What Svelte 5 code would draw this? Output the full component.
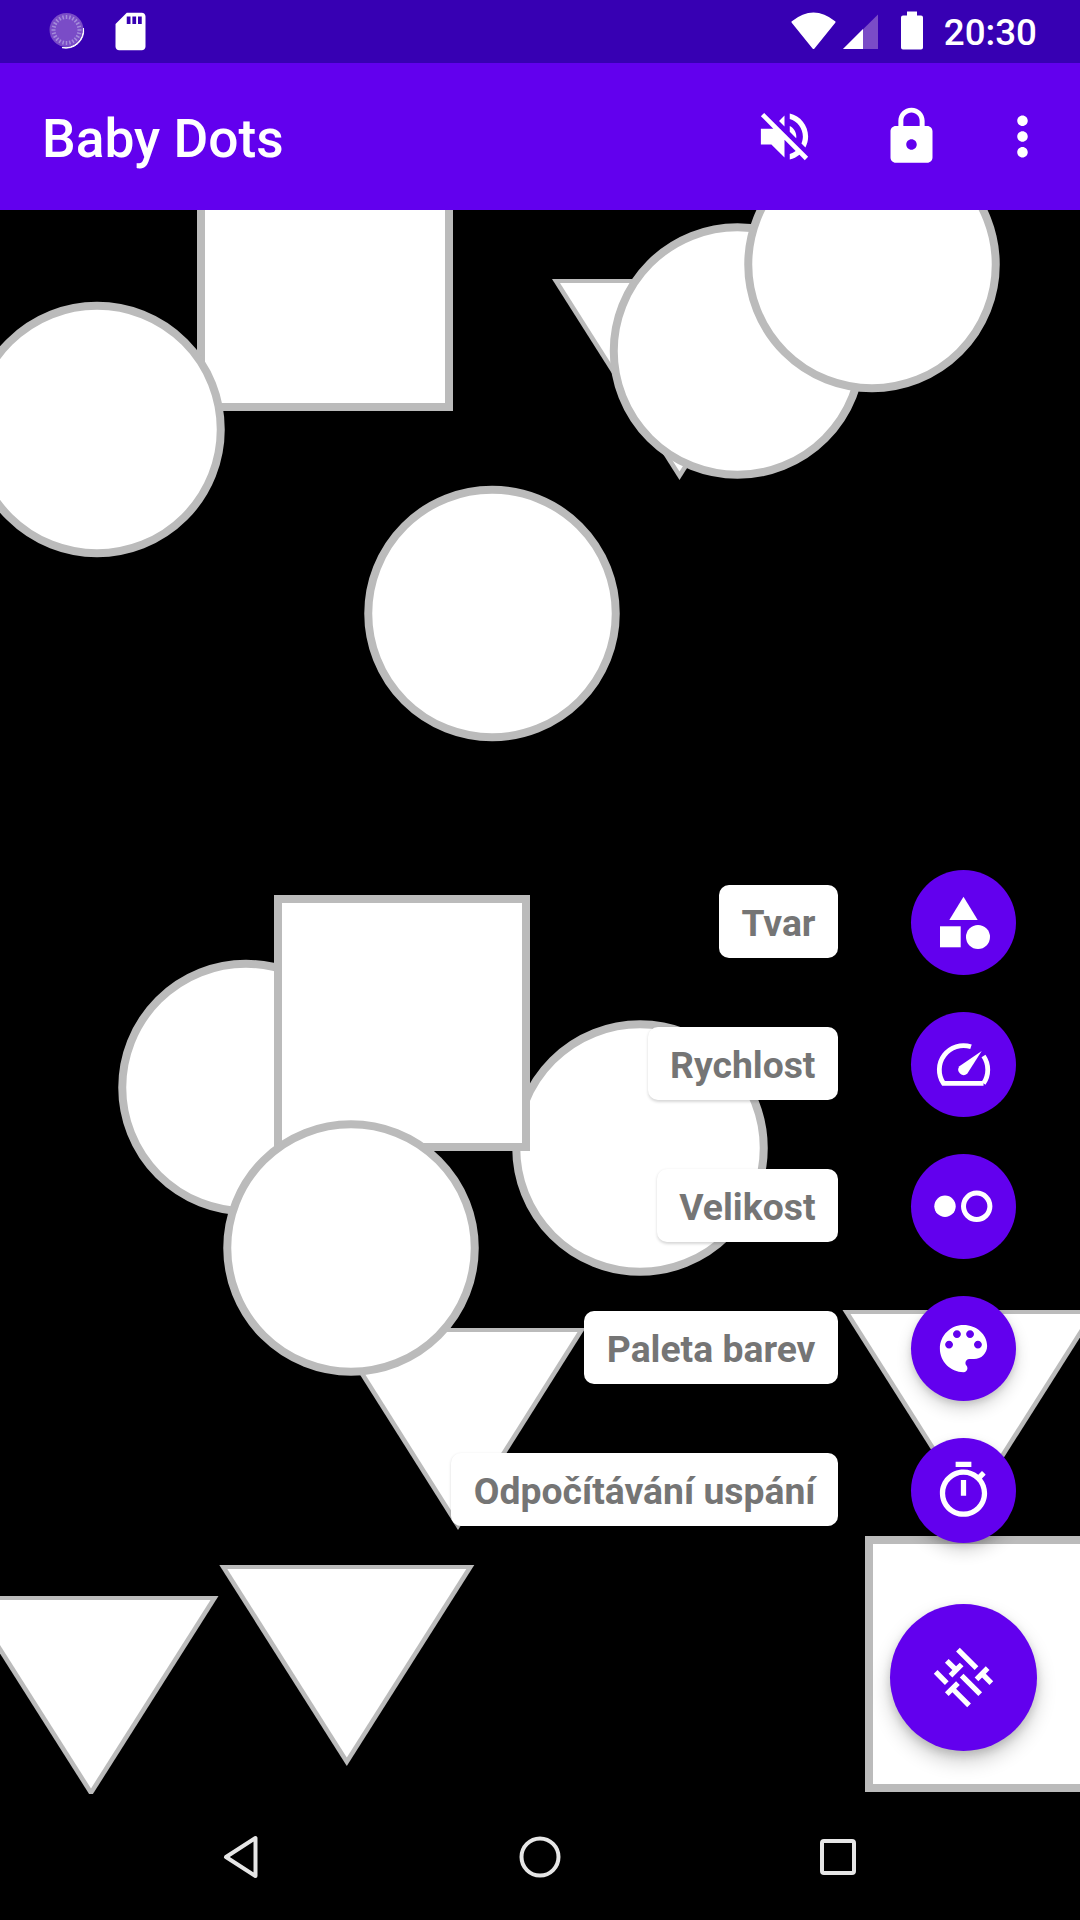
<script>
  const ticks = Array.from({ length: 24 }, (_, i) => (i * Math.PI) / 12);

  const tri = (L, T, W, H) => {
    const cx = L + W / 2;
    const outer = `${L},${T} ${L + W},${T} ${cx},${T + H}`;
    const inner = `${L + 8},${T + 4} ${L + W - 8},${T + 4} ${cx},${T + H - 8.6}`;
    return { outer, inner };
  };

  const shapes = [
    { k: 's', x: 197, y: 155 },
    { k: 'c', x: 97, y: 429.5 },
    { k: 't', ...tri(552, 279, 255, 201) },
    { k: 'c', x: 737.5, y: 351 },
    { k: 'c', x: 872, y: 264.5 },
    { k: 'c', x: 492, y: 613.5 },
    { k: 'c', x: 246, y: 1087.5 },
    { k: 'c', x: 640, y: 1148 },
    { k: 's', x: 274, y: 895 },
    { k: 't', ...tri(330.5, 1328, 255, 202) },
    { k: 'c', x: 351, y: 1248 },
    { k: 't', ...tri(842.5, 1310, 255, 201) },
    { k: 't', ...tri(-36.5, 1596, 255, 201) },
    { k: 't', ...tri(219.3, 1565, 255, 201) },
    { k: 's', x: 865, y: 1536 }
  ];

  const actions = [
    { label: 'Tvar', icon: 'shapes' },
    { label: 'Rychlost', icon: 'speed' },
    { label: 'Velikost', icon: 'size' },
    { label: 'Paleta barev', icon: 'palette' },
    { label: 'Odpočítávání uspání', icon: 'timer' }
  ];
</script>

<div class="screen">
  <header class="status">
    <svg class="progress" viewBox="0 0 45 45" aria-hidden="true">
      <circle cx="22.5" cy="21" r="17" fill="#7a4cc7" />
      {#each ticks as a}
        <line
          x1={22.5 + Math.cos(a) * 11}
          y1={21 + Math.sin(a) * 11}
          x2={22.5 + Math.cos(a) * 15}
          y2={21 + Math.sin(a) * 15}
          stroke="#a58cdb"
          stroke-width="1.5"
        />
      {/each}
      <path d="M39.5 19A17.5 17.5 0 0 1 18 38.6A18.5 18.5 0 0 0 39.5 19Z" fill="#fff" stroke="#fff" stroke-width="1" />
    </svg>
    <svg class="sd" viewBox="0 0 24 24" aria-hidden="true">
      <path fill="#fff" d="M18 2h-8L4.02 8 4 20c0 1.1.9 2 2 2h12c1.100 0 2-.9 2-2V4c0-1.100-.9-2-2-2zm-6 6h-2V4h2v4zm3 0h-2V4h2v4zm3 0h-2V4h2v4z" />
    </svg>
    <div class="spacer"></div>
    <svg class="wifi" viewBox="0 0 45 45" aria-hidden="true">
      <path d="M22.500 39L1.500 13Q22.500 -4 43.500 13Z" fill="#fff" stroke="#fff" stroke-width="2" stroke-linejoin="round" />
    </svg>
    <svg class="signal" viewBox="0 0 35 45" aria-hidden="true">
      <path d="M35 5.500V40H0Z" fill="#7a4cc7" />
      <path d="M0 40L20 20V40Z" fill="#fff" />
    </svg>
    <svg class="battery" viewBox="0 0 22 45" aria-hidden="true">
      <path d="M6 2.500h10v4h4a2 2 0 0 1 2 2V38.500a2 2 0 0 1-2 2H2a2 2 0 0 1-2-2V8.500a2 2 0 0 1 2-2h4z" fill="#fff" />
    </svg>
    <span class="time">20:30</span>
  </header>

  <div class="appbar">
    <h1>Baby Dots</h1>
    <svg class="ab-icon mute" viewBox="0 0 24 24" aria-hidden="true">
      <path fill="#fff" d="M16.500 12c0-1.770-1.020-3.290-2.500-4.030v2.210l2.450 2.450c.03-.2.05-.41.05-.63zm2.500 0c0 .94-.2 1.820-.54 2.640l1.510 1.510C20.630 14.910 21 13.500 21 12c0-4.280-2.990-7.860-7-8.770v2.060c2.890.86 5 3.540 5 6.710zM4.270 3L3 4.270 7.730 9H3v6h4l5 5v-6.730l4.250 4.250c-.67.52-1.420.93-2.250 1.180v2.060c1.380-.31 2.630-.95 3.690-1.810L19.730 21 21 19.730l-9-9L4.270 3zM12 4L9.910 6.090 12 8.180V4z" />
    </svg>
    <svg class="ab-icon lock" viewBox="0 0 24 24" aria-hidden="true">
      <path fill="#fff" d="M18 8h-1V6c0-2.760-2.240-5-5-5S7 3.240 7 6v2H6c-1.100 0-2 .9-2 2v10c0 1.100.9 2 2 2h12c1.100 0 2-.9 2-2V10c0-1.100-.9-2-2-2zm-6 9c-1.100 0-2-.9-2-2s.9-2 2-2 2 .9 2 2-.9 2-2 2zm3.100-9H8.900V6c0-1.710 1.390-3.100 3.100-3.100 1.710 0 3.100 1.390 3.100 3.100v2z" />
    </svg>
    <svg class="ab-icon more" viewBox="0 0 24 24" aria-hidden="true">
      <path fill="#fff" d="M12 8c1.100 0 2-.9 2-2s-.9-2-2-2-2 .9-2 2 .9 2 2 2zm0 2c-1.100 0-2 .9-2 2s.9 2 2 2 2-.9 2-2-.9-2-2-2zm0 6c-1.100 0-2 .9-2 2s.9 2 2 2 2-.9 2-2-.9-2-2-2z" />
    </svg>
  </div>

  <main class="canvas">
    <svg class="board" viewBox="0 210 1080 1584" aria-hidden="true">
      {#each shapes as s}
        {#if s.k === 'c'}
          <circle cx={s.x} cy={s.y} r="123.750" fill="#fff" stroke="#bbb" stroke-width="8" />
        {:else if s.k === 's'}
          <rect x={s.x + 4} y={s.y + 4} width="248" height="248" fill="#fff" stroke="#bbb" stroke-width="8" />
        {:else}
          <polygon points={s.outer} fill="#bbb" />
          <polygon points={s.inner} fill="#fff" />
        {/if}
      {/each}
    </svg>

    <div class="dial">
      {#each actions as a}
        <div class="row">
          <span class="tag">{a.label}</span>
          <button class="fab small" aria-label={a.label}>
            <svg viewBox="0 0 105 105" aria-hidden="true">
              {#if a.icon === 'shapes'}
                <path fill="#fff" d="M52.500 26.700L66.700 50H38.300Z" />
                <rect x="29" y="56.300" width="20.700" height="21" fill="#fff" />
                <circle cx="67" cy="67" r="12" fill="#fff" />
              {:else if a.icon === 'speed'}
                <path fill="none" stroke="#fff" stroke-width="4.800" d="M72.500 71.400H32.500A24.200 24.200 0 0 1 60 34.800" />
                <path fill="none" stroke="#fff" stroke-width="4.800" d="M72.500 71.400A24.200 24.200 0 0 0 72.500 44" />
                <path fill="#fff" d="M70.700 39L56.200 61.800A5.500 5.500 0 0 1 48.400 54.200Z" />
              {:else if a.icon === 'size'}
                <circle cx="34" cy="52.300" r="10.700" fill="#fff" />
                <circle cx="65.700" cy="52.300" r="13.200" fill="none" stroke="#fff" stroke-width="5" />
              {:else if a.icon === 'palette'}
                <path transform="translate(21 21) scale(2.625)" fill="#fff" d="M12 3c-4.970 0-9 4.030-9 9s4.030 9 9 9c.83 0 1.500-.67 1.500-1.500 0-.39-.15-.74-.39-1.010-.23-.26-.38-.61-.38-.99 0-.83.67-1.500 1.500-1.500H16c2.760 0 5-2.240 5-5 0-4.420-4.030-8-9-8zm-5.500 9c-.83 0-1.500-.67-1.500-1.500S5.670 9 6.500 9 8 9.670 8 10.500 7.330 12 6.500 12zm3-4C8.670 8 8 7.330 8 6.500S8.670 5 9.500 5s1.500.67 1.500 1.500S10.330 8 9.500 8zm5 0c-.83 0-1.500-.67-1.500-1.500S13.670 5 14.500 5s1.500.67 1.500 1.500S15.330 8 14.500 8zm3 4c-.83 0-1.500-.67-1.500-1.500S16.670 9 17.500 9s1.500.67 1.500 1.500-.67 1.500-1.500 1.500z" />
              {:else}
                <path transform="translate(21 21) scale(2.625)" fill="#fff" d="M15 1H9v2h6V1zm-4 13h2V8h-2v6zm8.030-6.610l1.420-1.420c-.43-.51-.9-.99-1.410-1.410l-1.420 1.420C16.070 4.740 14.120 4 12 4c-4.970 0-9 4.030-9 9s4.020 9 9 9 9-4.030 9-9c0-2.120-.74-4.070-1.970-5.610zM12 20c-3.870 0-7-3.130-7-7s3.130-7 7-7 7 3.130 7 7-3.130 7-7 7z" />
              {/if}
            </svg>
          </button>
        </div>
      {/each}
      <button class="fab main" aria-label="Nastavení">
        <svg viewBox="0 0 24 24" aria-hidden="true">
          <path transform="rotate(45 12 12)" fill="#fff" d="M3 17v2h6v-2H3zM3 5v2h10V5H3zm10 16v-2h8v-2h-8v-2h-2v6h2zM7 9v2H3v2h4v2h2V9H7zm14 4v-2H11v2h10zm-6-4h2V7h4V5h-4V3h-2v6z" />
        </svg>
      </button>
    </div>
  </main>

  <nav class="nav">
    <svg class="nav-icon" viewBox="0 0 60 60" aria-hidden="true">
      <path d="M43.500 11V49L14 30Z" fill="none" stroke="#e6e6e6" stroke-width="4" stroke-linejoin="round" />
    </svg>
    <svg class="nav-icon" viewBox="0 0 60 60" aria-hidden="true">
      <circle cx="30" cy="30" r="18.500" fill="none" stroke="#e6e6e6" stroke-width="4" />
    </svg>
    <svg class="nav-icon" viewBox="0 0 60 60" aria-hidden="true">
      <rect x="14" y="14" width="32" height="32" rx="2" fill="none" stroke="#e6e6e6" stroke-width="4" />
    </svg>
  </nav>
</div>

<style>
  :global(body) {
    margin: 0;
    background: #000;
  }
  .screen {
    width: 1080px;
    height: 1920px;
    display: flex;
    flex-direction: column;
    overflow: hidden;
    background: #000;
    font-family: Roboto, "Noto Sans", sans-serif;
  }
  .status {
    height: 63px;
    flex: none;
    background: #3700b3;
    display: flex;
    align-items: center;
    padding: 0 43px 0 44px;
    box-sizing: border-box;
  }
  .status svg {
    display: block;
    height: 45px;
    flex: none;
  }
  .progress {
    width: 45px;
  }
  .sd {
    width: 45px;
    margin-left: 19px;
  }
  .spacer {
    flex: 1;
  }
  .wifi {
    width: 45px;
  }
  .signal {
    width: 35px;
    margin-left: 7px;
  }
  .battery {
    width: 22px;
    margin-left: 23px;
  }
  .time {
    margin-left: 21px;
    padding-top: 1px;
    color: #fff;
    font-size: 36.75px;
    font-weight: 500;
    line-height: 63px;
  }
  .appbar {
    height: 147px;
    flex: none;
    background: #6200ee;
    display: flex;
    align-items: center;
    padding-left: 42px;
    box-sizing: border-box;
  }
  h1 {
    margin: 4px 0 0;
    flex: 1;
    color: #fff;
    font-size: 53.3px;
    font-weight: 500;
  }
  .ab-icon {
    display: block;
    width: 63px;
    height: 63px;
    flex: none;
  }
  .lock {
    margin-left: 64px;
  }
  .more {
    margin-left: 47.500px;
    margin-right: 26.500px;
  }
  .canvas {
    flex: 1;
    position: relative;
    overflow: hidden;
    background: #000;
  }
  .board {
    position: absolute;
    inset: 0;
    width: 100%;
    height: 100%;
    display: block;
  }
  .dial {
    position: absolute;
    right: 43px;
    bottom: 43px;
    display: flex;
    flex-direction: column;
    align-items: flex-end;
    gap: 37px;
  }
  .row {
    display: flex;
    align-items: center;
    margin-right: 21px;
    gap: 73px;
  }
  .tag {
    height: 73px;
    line-height: 76px;
    margin-bottom: 2px;
    padding: 0 22.500px;
    background: #fff;
    border-radius: 10px;
    color: #757575;
    font-size: 37.300px;
    font-weight: 700;
    white-space: nowrap;
    box-shadow: 0 1.500px 3px rgba(0, 0, 0, 0.16);
  }
  .fab {
    border: 0;
    padding: 0;
    margin: 0;
    border-radius: 50%;
    background: #6200ee;
    flex: none;
    display: flex;
    align-items: center;
    justify-content: center;
  }
  .fab.small {
    width: 105px;
    height: 105px;
    box-shadow: 0 8px 16px rgba(0, 0, 0, 0.16), 0 3px 6px rgba(0, 0, 0, 0.12);
  }
  .fab.small svg {
    width: 105px;
    height: 105px;
    display: block;
  }
  .fab.main {
    width: 147px;
    height: 147px;
    margin-top: 24px;
    box-shadow: 0 10px 20px rgba(0, 0, 0, 0.2), 0 4px 8px rgba(0, 0, 0, 0.14);
  }
  .fab.main svg {
    width: 63px;
    height: 63px;
    display: block;
  }
  .nav {
    height: 126px;
    flex: none;
    background: #000;
    display: flex;
    align-items: center;
    justify-content: center;
    gap: 238px;
  }
  .nav-icon {
    width: 60px;
    height: 60px;
    display: block;
  }
</style>
